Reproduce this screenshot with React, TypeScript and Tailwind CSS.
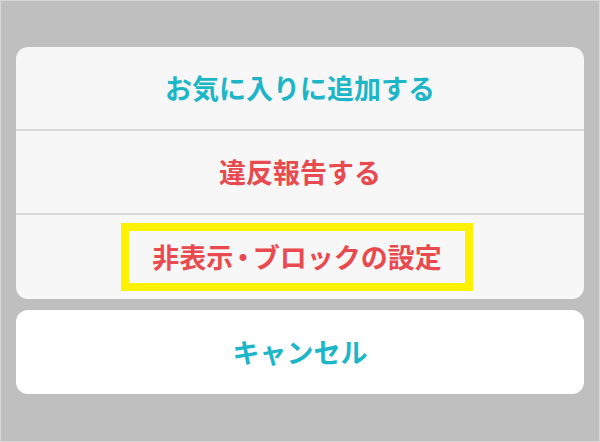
const font = { fontFamily: '"Noto Sans CJK JP", "Noto Sans", sans-serif' };

export default function App() {
  return (
    <div
      className="box-border flex h-[442px] w-[600px] flex-col border border-[#d6d6d6] bg-[#bfbfbf] px-[15px] pt-[46px]"
      style={font}
    >
      <div className="flex flex-col overflow-hidden rounded-[12px] bg-[#f7f7f7]">
        <button className="flex h-[84px] items-center justify-center border-b-2 border-[#d8d8d8] text-[27px] font-bold text-[#1db6c8]">
          お気に入りに追加する
        </button>
        <button className="flex h-[84px] items-center justify-center border-b-2 border-[#d8d8d8] text-[27px] font-bold text-[#e84a4f]">
          違反報告する
        </button>
        <div className="flex h-[84px] items-center justify-center">
          <span className="box-border mr-[6px] inline-flex h-[68px] w-[352px] items-center justify-center border-[8px] border-[#fff200] text-[27px] font-bold text-[#e84a4f]">
            非表示<span className="px-[3px] [font-feature-settings:'palt']">・</span>ブロックの設定
          </span>
        </div>
      </div>
      <button className="mt-[11px] flex h-[84px] items-center justify-center rounded-[12px] bg-white text-[27px] font-bold text-[#1db6c8]">
        キャンセル
      </button>
    </div>
  );
}
